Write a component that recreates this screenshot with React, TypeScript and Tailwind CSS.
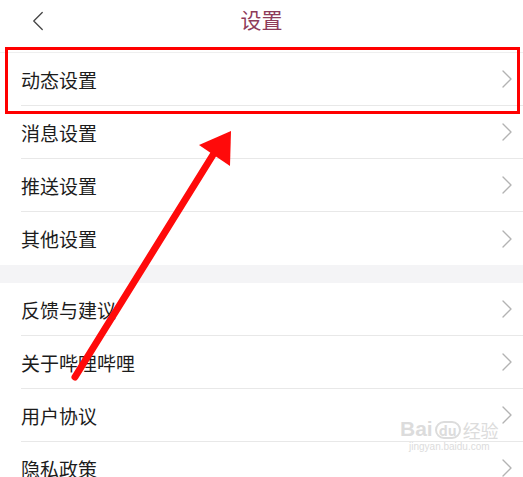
import { ChevronLeft, ChevronRight } from 'lucide-react';

const groupA = ['动态设置', '消息设置', '推送设置', '其他设置'];
const groupB = ['反馈与建议', '关于哔哩哔哩', '用户协议', '隐私政策'];

function Row({ label, last }: { label: string; last?: boolean }) {
  return (
    <div className="flex h-[53px] items-center pl-[21px]">
      <div
        className={`flex h-full flex-1 items-center ${last ? '' : 'border-b border-[#e8e8e8]'}`}
      >
        <span className="flex-1 text-[19px] leading-none text-[#1c1c1c]">{label}</span>
        <ChevronRight className="h-[32px] w-[32px] text-[#b3b3b3]" strokeWidth={1} />
      </div>
    </div>
  );
}

export default function App() {
  return (
    <div
      className="relative h-[477px] w-[523px] overflow-hidden bg-white"
      style={{ fontFamily: '"Noto Sans CJK SC", "Noto Sans", sans-serif' }}
    >
      <div className="relative h-[53px] border-b border-[#efefef]">
        <ChevronLeft
          className="absolute left-[21px] top-[4px] h-[34px] w-[34px] text-[#444]"
          strokeWidth={0.9}
        />
        <div className="flex h-[40px] items-center justify-center">
          <span className="text-[21px] text-[#8e3b5a]">设置</span>
        </div>
      </div>

      {groupA.map((label, i) => (
        <Row key={label} label={label} last={i === groupA.length - 1} />
      ))}
      <div className="h-[18px] bg-[#f4f4f6]" />
      {groupB.map((label) => (
        <Row key={label} label={label} />
      ))}

      {/* annotation: red box */}
      <div className="pointer-events-none absolute left-[5px] top-[47px] h-[67px] w-[515px] border-[3px] border-[#ff0000]" />

      {/* annotation: arrow */}
      <svg className="pointer-events-none absolute left-0 top-0" width="523" height="477">
        <line x1="75" y1="377" x2="216" y2="150" stroke="#ff0a0a" strokeWidth="7" strokeLinecap="round" />
        <polygon points="231,131 199,145 230,166" fill="#ff0a0a" />
      </svg>

      {/* watermark */}
      <div className="pointer-events-none absolute left-[400px] top-[418px] flex flex-col items-center leading-none text-[#dcdcdc]">
        <div className="flex items-end gap-[2px]">
          <span className="text-[21px] font-bold" style={{ fontFamily: '"Liberation Sans", sans-serif' }}>
            Bai
          </span>
          <span className="rounded-full border-2 border-[#dcdcdc] px-[2px] text-[14px] font-bold">du</span>
          <span className="text-[18px]">经验</span>
        </div>
        <span className="mt-[3px] text-[10px]" style={{ fontFamily: '"Liberation Sans", sans-serif' }}>
          jingyan.baidu.com
        </span>
      </div>
    </div>
  );
}
